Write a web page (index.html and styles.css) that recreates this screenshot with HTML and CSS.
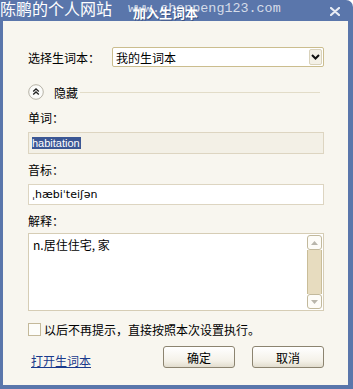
FILE: index.html
```html
<!DOCTYPE html>
<html lang="zh-CN">
<head>
    <meta charset="UTF-8">
    <meta name="viewport" content="width=device-width, initial-scale=1.0">
    <title>加入生词本</title>
    <link rel="stylesheet" href="styles.css">
</head>
<body>

    <div class="window">
        <div class="titlebar">
            <span class="title">加入生词本</span>
            <span class="close">
                <svg width="10" height="9" viewBox="0 0 10 9">
                    <path d="M1 1 L9 8 M9 1 L1 8" stroke="#e8ecf4" stroke-width="2.2" stroke-linecap="round"/>
                </svg>
            </span>
            <!-- watermark over the title bar -->
            <div class="watermark">
                <span class="wm-name">陈鹏的个人网站</span>
                <span class="wm-url">www.chenpeng123.com</span>
            </div>
        </div>

        <div class="content">
            <div class="select-row">
                <span class="label">选择生词本：</span>
                <div class="select">
                    <span class="select-text">我的生词本</span>
                    <span class="drop">
                        <svg width="9" height="6" viewBox="0 0 9 6">
                            <path d="M1 1 L4.5 4.5 L8 1" fill="none" stroke="#111" stroke-width="2"/>
                        </svg>
                    </span>
                </div>
            </div>

            <div class="toggle-row">
                <span class="toggle-icon">
                    <svg width="16" height="16" viewBox="0 0 16 16">
                        <circle cx="8" cy="8" r="7.3" fill="#fbfbf9" stroke="#b6b2a6" stroke-width="1"/>
                        <path d="M5.2 7.6 L8 5 L10.8 7.6 M5.2 10.6 L8 8 L10.8 10.6" fill="none" stroke="#222" stroke-width="1.3"/>
                    </svg>
                </span>
                <span class="toggle-text">隐藏</span>
                <span class="rule"></span>
            </div>

            <div class="field-label first">单词：</div>
            <div class="input readonly"><span class="selected">habitation</span></div>

            <div class="field-label">音标：</div>
            <div class="input phonetic">ˌhæbiˈteiʃən</div>

            <div class="field-label">解释：</div>
            <div class="textarea">
                <div class="textarea-text">n.居住住宅, 家</div>
                <div class="scrollbar">
                    <span class="scroll-btn">
                        <svg width="7" height="4" viewBox="0 0 7 4"><path d="M0 4 L3.5 0 L7 4 Z" fill="#b9b6ac"/></svg>
                    </span>
                    <span class="scroll-track"></span>
                    <span class="scroll-btn">
                        <svg width="7" height="4" viewBox="0 0 7 4"><path d="M0 0 L3.5 4 L7 0 Z" fill="#b9b6ac"/></svg>
                    </span>
                </div>
            </div>

            <div class="check-row">
                <span class="checkbox"></span>
                <span>以后不再提示，直接按照本次设置执行。</span>
            </div>

            <div class="footer">
                <a class="link" href="#">打开生词本</a>
                <div class="buttons">
                    <button class="button">确定</button>
                    <button class="button">取消</button>
                </div>
            </div>
        </div>
    </div>

</body>
</html>
```

FILE: styles.css
```css
body {
    margin: 0;
    padding: 0;
    background-color: #ffffff;
    font-family: 'Noto Sans CJK SC', 'Noto Sans', sans-serif;
    font-size: 12px;
    color: #000;
}

.window {
    height: 389px;
    width: 353px;
    box-sizing: border-box;
    display: flex;
    flex-direction: column;
    background-color: #5a76ab;
    border-top-right-radius: 7px;
    padding: 0 5px 4px 3px;
}

/* title bar */
.titlebar {
    position: relative;
    height: 21px;
    flex-shrink: 0;
    display: flex;
    align-items: center;
}

.title {
    margin-left: 130px;
    color: #ffffff;
    font-weight: bold;
    font-size: 13px;
    line-height: 16px;
    margin-top: 4px;
    text-shadow: 1px 1px 0 #3c5282;
}

.close {
    margin-left: auto;
    margin-right: 8px;
    margin-top: 2px;
    display: flex;
}

.watermark {
    position: absolute;
    top: 0;
    left: -3px;
    display: flex;
    align-items: center;
    gap: 16px;
    pointer-events: none;
}

.wm-name {
    color: #ffffff;
    font-size: 16px;
    line-height: 17px;
}

.wm-url {
    color: rgba(255, 255, 255, 0.75);
    font-family: 'Liberation Mono', monospace;
    font-size: 13.4px;
    line-height: 17px;
}

/* dialog body */
.content {
    flex: 1;
    background-color: #f8f6ef;
    padding: 26px 24px 0 25px;
    display: flex;
    flex-direction: column;
}

.select-row {
    display: flex;
    align-items: center;
    height: 20px;
}

.label {
    width: 84px;
}

.select {
    flex: 1;
    height: 20px;
    box-sizing: border-box;
    border: 1px solid #cbbd8e;
    border-radius: 2px;
    background-color: #ffffff;
    display: flex;
    align-items: center;
    padding: 1px;
}

.select-text {
    flex: 1;
    padding-left: 2px;
}

.drop {
    width: 13px;
    height: 16px;
    box-sizing: border-box;
    border: 1px solid #d9d2bb;
    border-radius: 2px;
    background-color: #f4f1e7;
    display: flex;
    align-items: center;
    justify-content: center;
}

.toggle-row {
    display: flex;
    align-items: center;
    height: 16px;
    margin-top: 17px;
}

.toggle-icon {
    display: flex;
    width: 16px;
    height: 16px;
}

.toggle-text {
    margin-left: 10px;
}

.rule {
    flex: 1;
    height: 1px;
    background-color: #e2dcc8;
    margin-left: 2px;
    margin-right: 4px;
}

.field-label {
    line-height: 16px;
    margin-top: 8px;
}

.field-label.first {
    margin-top: 10px;
}

.input {
    height: 21px;
    box-sizing: border-box;
    border: 1px solid #ddd5c1;
    background-color: #ffffff;
    display: flex;
    align-items: center;
    padding-left: 3px;
    margin-top: 6px;
    font-family: 'DejaVu Sans', sans-serif;
    font-size: 11px;
}

.readonly {
    height: 22px;
    background-color: #f3f0e6;
}

.selected {
    background-color: #3b5794;
    color: #ffffff;
    font-family: 'Liberation Sans', sans-serif;
    font-size: 11px;
    line-height: 12px;
    padding-right: 1px;
}

.textarea {
    height: 78px;
    box-sizing: border-box;
    border: 1px solid #d6cdb5;
    background-color: #ffffff;
    display: flex;
    margin-top: 4px;
    padding: 1px 1px 1px 4px;
}

.textarea-text {
    flex: 1;
    line-height: 16px;
    padding-top: 2px;
}

.scrollbar {
    width: 15px;
    display: flex;
    flex-direction: column;
}

.scroll-btn {
    height: 15px;
    box-sizing: border-box;
    border: 1px solid #c2b99c;
    border-radius: 3px;
    background-color: #fdfcf8;
    display: flex;
    align-items: center;
    justify-content: center;
}

.scroll-track {
    flex: 1;
    background-color: #e7dcbf;
    border-left: 1px solid #c9bd98;
    border-right: 1px solid #c9bd98;
}

.check-row {
    display: flex;
    align-items: center;
    gap: 3px;
    height: 16px;
    margin-top: 10px;
}

.checkbox {
    width: 13px;
    height: 13px;
    box-sizing: border-box;
    border: 1px solid #c4b99a;
    background-color: #fdfdfa;
}

.footer {
    display: flex;
    align-items: center;
    margin-top: 9px;
    height: 22px;
}

.link {
    color: #1a3a8c;
    text-decoration: underline;
    margin-left: 3px;
    margin-top: 6px;
}

.buttons {
    margin-left: auto;
    display: flex;
    gap: 17px;
}

.button {
    width: 72px;
    height: 22px;
    box-sizing: border-box;
    font-family: 'Noto Sans CJK SC', sans-serif;
    font-size: 12px;
    color: #000;
    border: 1px solid #8c8470;
    border-radius: 3px;
    background: linear-gradient(#ffffff, #f4f1e8 70%, #e2ddce);
    padding: 0;
}
```
